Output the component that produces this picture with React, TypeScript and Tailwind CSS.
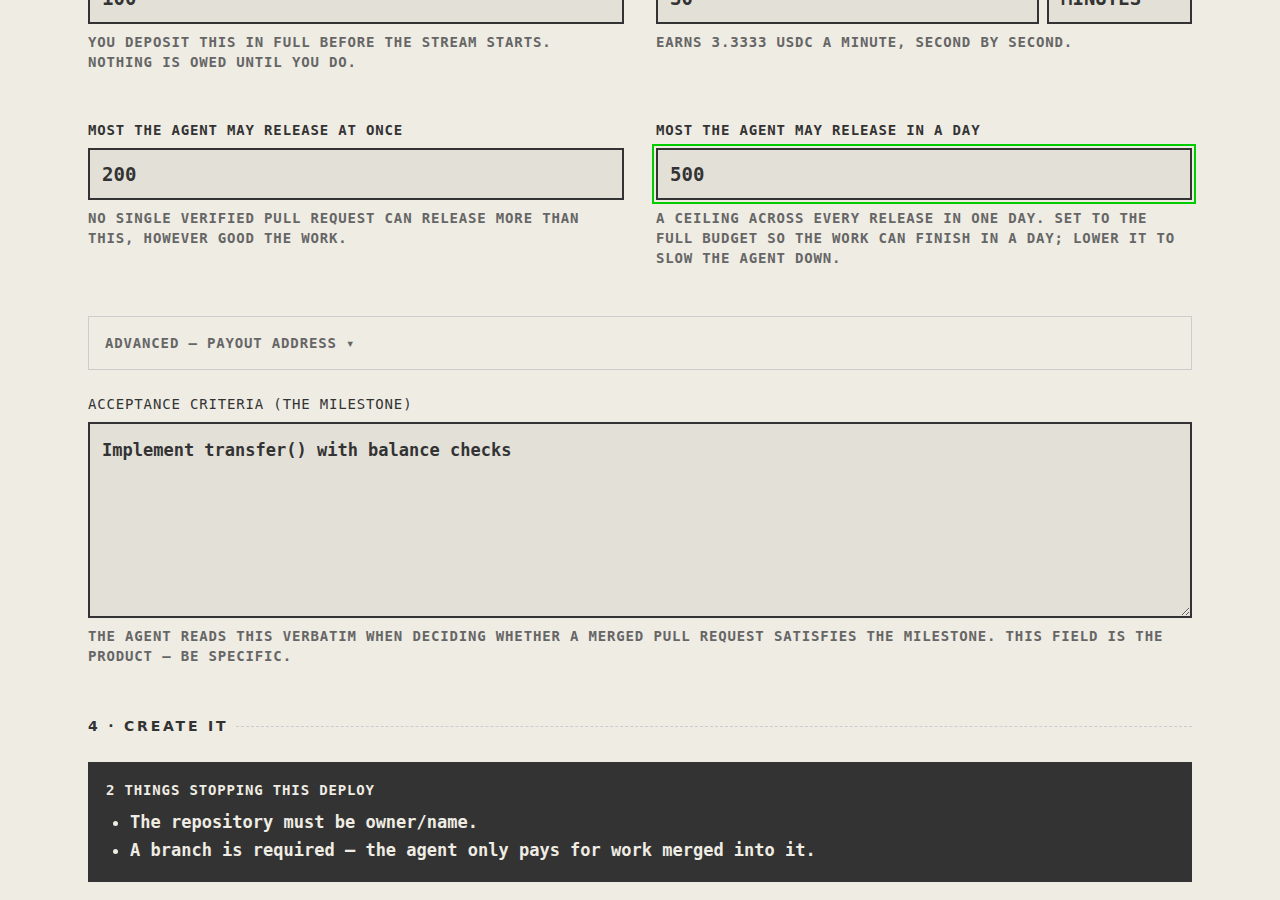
import type { ReactNode } from "react";

const fieldBox =
  "w-full border-2 border-[#333333] bg-[#e3e0d8] px-3 text-[#333333] rounded-none outline-[#00cc00] focus-visible:outline-2 focus-visible:outline-offset-2";
const fieldText = "h-[52px] text-[19px] leading-7 font-bold";
const caps = "text-sm leading-5 tracking-[0.06em] uppercase";

function Hint({ id, children }: { id: string; children: ReactNode }) {
  return (
    <p id={id} className={`${caps} font-bold text-[#666666]`}>
      {children}
    </p>
  );
}

type AmountProps = {
  id: string;
  label: string;
  value: string;
  hint: string;
  highlighted?: boolean;
};

function AmountField({ id, label, value, hint, highlighted }: AmountProps) {
  return (
    <div className="flex flex-col gap-2">
      <label htmlFor={id} className={`${caps} font-bold`}>
        {label}
      </label>
      <input
        id={id}
        type="text"
        inputMode="decimal"
        defaultValue={value}
        aria-describedby={`${id}-hint`}
        className={`${fieldBox} ${fieldText} ${highlighted ? "outline-2 outline-offset-2" : ""}`}
      />
      <Hint id={`${id}-hint`}>{hint}</Hint>
    </div>
  );
}

export default function App() {
  return (
    <main className="min-h-screen overflow-hidden bg-[#efece4] px-22 pb-4 font-['DejaVu_Sans_Mono',monospace] text-[#333333]">
      <form className="flex flex-col">
        <div className="-mt-7 grid grid-cols-2 gap-8">
          <div className="flex flex-col gap-2">
            <input
              type="text"
              aria-label="Budget"
              aria-describedby="budget-hint"
              defaultValue="100"
              className={`${fieldBox} ${fieldText}`}
            />
            <Hint id="budget-hint">
              You deposit this in full before the stream starts. Nothing is owed until you do.
            </Hint>
          </div>
          <div className="flex flex-col gap-2">
            <div className="flex gap-2">
              <input
                type="text"
                aria-label="Duration"
                aria-describedby="duration-hint"
                defaultValue="30"
                className={`${fieldBox} ${fieldText} min-w-0 flex-1`}
              />
              <div className="w-[145px]">
                <select
                  aria-label="Duration unit"
                  defaultValue="minutes"
                  className={`${fieldBox} ${fieldText} appearance-none uppercase`}
                >
                  <option value="minutes">minutes</option>
                </select>
              </div>
            </div>
            <Hint id="duration-hint">Earns 3.3333 USDC a minute, second by second.</Hint>
          </div>
        </div>

        <div className="mt-12 grid grid-cols-2 gap-8">
          <AmountField
            id="per-release"
            label="Most the agent may release at once"
            value="200"
            hint="No single verified pull request can release more than this, however good the work."
          />
          <AmountField
            id="per-day"
            label="Most the agent may release in a day"
            value="500"
            hint="A ceiling across every release in one day. Set to the full budget so the work can finish in a day; lower it to slow the agent down."
            highlighted
          />
        </div>

        <button
          type="button"
          className={`${caps} mt-12 border border-[#cccccc] p-4 text-left font-bold text-[#666666]`}
        >
          Advanced — payout address ▾
        </button>

        <div className="mt-6 flex flex-col gap-2">
          <label htmlFor="criteria" className={caps}>
            Acceptance criteria (the milestone)
          </label>
          <textarea
            id="criteria"
            aria-describedby="criteria-hint"
            defaultValue="Implement transfer() with balance checks"
            className={`${fieldBox} block h-[196px] resize-y py-3 text-[17px] leading-7 font-bold`}
          />
          <Hint id="criteria-hint">
            The agent reads this verbatim when deciding whether a merged pull request satisfies the
            milestone. This field is the product — be specific.
          </Hint>
        </div>

        <div className="mt-12 flex items-center gap-2">
          <h2 className="font-['DejaVu_Sans',sans-serif] text-sm leading-6 font-bold tracking-[0.2em] uppercase">
            4 · Create it
          </h2>
          <div className="flex-1 border-t border-dashed border-[#cccccc]" />
        </div>

        <section className="mt-6 flex flex-col gap-2 border-2 border-[#333333] bg-[#333333] p-4 font-bold text-[#efece4]">
          <h3 className={caps}>2 things stopping this deploy</h3>
          <ul className="list-disc pl-6 text-[17px] leading-7">
            <li>The repository must be owner/name.</li>
            <li>A branch is required — the agent only pays for work merged into it.</li>
          </ul>
        </section>
      </form>
    </main>
  );
}
